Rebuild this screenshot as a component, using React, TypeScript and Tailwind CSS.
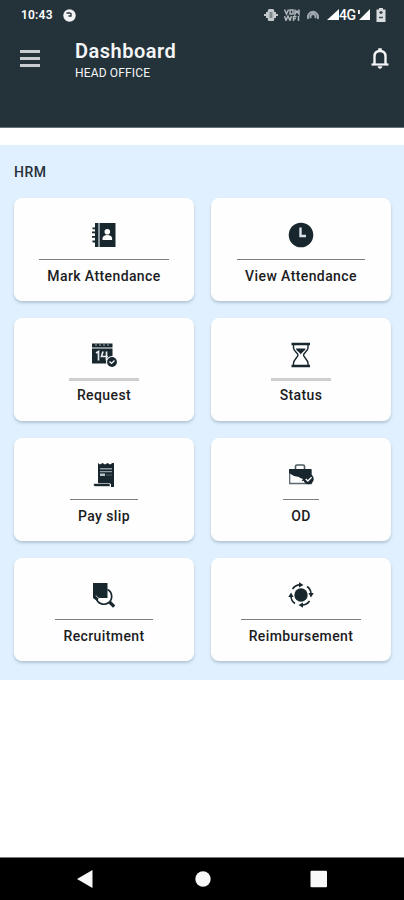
import React from "react";

type MenuItem = {
  title: string;
  icon: React.ReactNode;
  line: string;
};

// Address book
const BookIcon = () => (
  <svg width="26" height="26" viewBox="0 0 26 26" fill="#18262e">
    <path d="M4 1h3v24H4z" />
    <path d="M1.500 5.500H5v1.800H1.500zM1 9.500h4v1.800H1zM1 14h4v1.800H1zM1.500 18.600H5v1.800H1.500z" />
    <path d="M7 1h2v24H7z" fill="#8b969d" />
    <path d="M9 1h15.500v24H9z" />
    <circle cx="16.300" cy="9.700" r="2.800" fill="#fff" />
    <path d="M11.500 18v-1.500c0-2 2-3.500 4.800-3.500s4.800 1.500 4.800 3.500V18z" fill="#fff" />
  </svg>
);

const ClockIcon = () => (
  <svg width="26" height="26" viewBox="0 0 26 26">
    <circle cx="13" cy="13" r="12.300" fill="#18262e" />
    <path d="M12.500 5.500V14H18" fill="none" stroke="#dbe2e6" strokeWidth="2.400" />
  </svg>
);

// Calendar with a check badge
const CalendarIcon = () => (
  <svg width="26" height="26" viewBox="0 0 26 26">
    <path d="M1 1.500h20.500V5.500H1z" fill="#18262e" />
    <path d="M4 3h2M8 3h2M12 3h2M16 3h2" stroke="#a5adb1" strokeWidth="1.200" />
    <path d="M1 6.500h20.500v15H1z" fill="#18262e" />
    <path d="M5 11l2.500-1.500V18.500M12 9.500L10.500 14.500H17M15.500 9.500V18.500" fill="none" stroke="#e6eaec" strokeWidth="1.700" />
    <circle cx="21" cy="20" r="6" fill="#fff" />
    <circle cx="21" cy="20" r="4.900" fill="#18262e" />
    <path d="M18.500 19.500l2 2 3-3" fill="none" stroke="#fff" strokeWidth="1.200" />
  </svg>
);

const HourglassIcon = () => (
  <svg width="26" height="26" viewBox="0 0 26 26" fill="none" stroke="#18262e">
    <path d="M3.500 2h18.500M3.500 24h18.500" strokeWidth="2.400" />
    <path d="M5.500 3v3c0 3 4.500 5 4.500 7S5.500 18 5.500 21v3M20 3v3c0 3-4.500 5-4.500 7s4.500 5 4.500 8v3" strokeWidth="1.400" />
    <path d="M8 6.500h9.500c0 2.500-3.400 3-4.700 6-1.300-3-4.800-3.500-4.800-6z" fill="#18262e" stroke="none" />
  </svg>
);

const SlipIcon = () => (
  <svg width="26" height="26" viewBox="0 0 26 26">
    <path d="M7 1l2 1.500L11.500 1 14 2.500 16.500 1 19 2.500 21.500 1H23v24h-3v-3H7z" fill="#18262e" />
    <path d="M9 6h12v1.500H9zM9 9h12v1.300H9z" fill="#8f9ba1" />
    <path d="M9 11.500h5v2.500H9z" fill="#bac2c6" />
    <path d="M15 13h6" stroke="#52626b" strokeWidth="1" />
    <path d="M2.500 21.500H19v3H4c-1 0-1.500-1-1.500-3z" fill="#18262e" stroke="#fff" strokeWidth=".6" />
  </svg>
);

// Briefcase with a check badge
const BriefcaseIcon = () => (
  <svg width="26" height="26" viewBox="0 0 26 26">
    <path d="M7.500 7V4.500C7.500 3.500 8.200 3 9 3h6c.8 0 1.500.5 1.500 1.500V7" fill="none" stroke="#4a5961" strokeWidth="1.600" />
    <path d="M1.700 8h21.600v13.500H1.700z" fill="#fff" stroke="#5b686f" strokeWidth="1.300" />
    <path d="M1 7h22v8l-2 3-7 1-3-4-5-1-5-3z" fill="#18262e" />
    <path d="M9.500 15l4 4 1.500-2" fill="#fff" />
    <circle cx="20.500" cy="17" r="5.200" fill="#18262e" />
    <path d="M17.800 17l2 2 3.800-3.800" fill="none" stroke="#fff" strokeWidth="1.300" />
  </svg>
);

const SearchDocIcon = () => (
  <svg width="26" height="26" viewBox="0 0 26 26">
    <path d="M2 1h14.500v15H8l-2 3-4-3z" fill="#18262e" />
    <path d="M16.500 7.500a7.800 7.800 0 1 1-11.300 8.300" fill="none" stroke="#18262e" strokeWidth="1.700" />
    <path d="M5 13.500c1 1.800 2 2.500 3.500 2.800" fill="none" stroke="#fff" strokeWidth=".8" />
    <path d="M18.500 20l4.700 4.700" stroke="#18262e" strokeWidth="3.200" />
  </svg>
);

// Coin with rotating arrows
const RefundIcon = () => (
  <svg width="26" height="26" viewBox="0 0 26 26">
    <circle cx="13" cy="13" r="6.700" fill="#18262e" />
    <g fill="#18262e">
      {[0, 90, 180, 270].map((angle) => (
        <g key={angle} transform={`rotate(${angle} 13 13)`}>
          <path d="M4.500 7C6.200 4.500 8.500 3 12 2.900" fill="none" stroke="#18262e" strokeWidth="1.600" />
          <path d="M11 .300l4.500 2.700-4.500 2.600z" />
        </g>
      ))}
    </g>
  </svg>
);

const thinLine = "mt-[11px] h-px bg-[#7d7d7d]";
const thickLine = "mt-[10px] mb-[-2px] h-[3px] bg-[#d0cfd0]";

const menu: MenuItem[] = [
  { title: "Mark Attendance", icon: <BookIcon />, line: `${thinLine} w-[130px]` },
  { title: "View Attendance", icon: <ClockIcon />, line: `${thinLine} w-[128px]` },
  { title: "Request", icon: <CalendarIcon />, line: `${thickLine} w-[70px]` },
  { title: "Status", icon: <HourglassIcon />, line: `${thickLine} w-[60px]` },
  { title: "Pay slip", icon: <SlipIcon />, line: `${thinLine} w-[68px]` },
  { title: "OD", icon: <BriefcaseIcon />, line: `${thinLine} w-9` },
  { title: "Recruitment", icon: <SearchDocIcon />, line: `${thinLine} w-[98px]` },
  { title: "Reimbursement", icon: <RefundIcon />, line: `${thinLine} w-[120px]` },
];

const StatusBar = () => (
  <div className="flex h-[30px] items-center pl-[21px] pr-[18px] text-white">
    <span className="w-[33px] text-[12px] font-semibold leading-none tracking-[0.2px]">10:43</span>
    <svg className="ml-[9px]" width="13" height="13" viewBox="0 0 13 13">
      <circle cx="6.500" cy="6.500" r="6.200" fill="#f1f3f4" />
      <path d="M3.500 4h4M5.500 7h2.500V4" fill="none" stroke="#24323a" strokeWidth="1.300" />
    </svg>
    <div className="ml-auto flex items-center">
      {/* Vibrate */}
      <svg width="14" height="12" viewBox="0 0 14 12" fill="#c3c9cc">
        <path d="M0 5h2v2H0zM12 5h2v2h-2zM2 3h2v6H2zM10 3h2v6h-2z" />
        <rect x="3.800" y="0" width="6.400" height="12" rx="1.500" />
        <path d="M5.500 3h3v6h-3z" fill="#7c888e" />
      </svg>
      {/* VoWiFi */}
      <svg className="ml-[6px]" width="16" height="12" viewBox="0 0 16 12" fill="none" stroke="#aeb6ba" strokeWidth="1.500">
        <path d="M.5.500L2.500 5l2-4.500M6 1v4h3V1zM11 .500V5l2-3 2 3V.500M.5 7l1.500 4.500L4 7l2 4.500L7.500 7M9.500 7v5M9.500 7.500h3M9.500 9.500h2.500M14.500 7v5" />
      </svg>
      {/* Hotspot */}
      <svg className="ml-[7px]" width="12" height="12" viewBox="0 0 12 12" fill="none" stroke="#9fa9ae" strokeWidth="2">
        <path d="M1.500 10A5 5 0 1 1 10.500 10M4 9a2.500 2.500 0 1 1 4 0" />
      </svg>
      <svg className="ml-[8px]" width="12" height="12" viewBox="0 0 12 12" fill="#fff">
        <path d="M12 0v11H0z" />
      </svg>
      <span className="w-[17px] text-[14px] font-medium leading-none tracking-[-0.5px]">4G</span>
      <svg className="ml-px" width="14" height="12" viewBox="0 0 14 12" fill="#fff">
        <path d="M13 0v11H2zM1 1h1.800v4H1z" />
      </svg>
      <svg className="ml-[5px]" width="10" height="14" viewBox="0 0 10 14">
        <path d="M3 0h4v1.500h2.500V14H.5V1.500H3z" fill="#d9dddf" />
        <path d="M5 3v3M3.300 4.500h3.400M3 9.500h4" stroke="#3c4a52" strokeWidth="1.500" />
      </svg>
    </div>
  </div>
);

const Header = () => (
  <header className="h-32 border-b border-[#66737b] bg-[#24323a]">
    <StatusBar />
    <div className="flex pl-5 pr-[14px] text-[#f4f5f6]">
      <button className="mt-5 flex h-[17px] w-[20px] flex-col justify-between" aria-label="Menu">
        <span className="h-[3px] w-full bg-[#c8cdd0]" />
        <span className="h-[3px] w-full bg-[#c8cdd0]" />
        <span className="h-[3px] w-full bg-[#c8cdd0]" />
      </button>
      <div className="ml-[35px] mt-[9px]">
        <h1 className="text-[20px] font-semibold leading-6 tracking-[0.5px]">Dashboard</h1>
        <p className="mt-px text-[12px] leading-[19px] tracking-[0.15px]">HEAD OFFICE</p>
      </div>
      <svg className="ml-auto mt-[17px]" width="20" height="23" viewBox="0 0 20 23" fill="none" stroke="#f4f5f6">
        <path d="M4.500 17V9.500C4.500 6 6.800 4 10 4s5.500 2 5.500 5.500V17" strokeWidth="2.400" />
        <path d="M1.500 17.500h17" strokeWidth="2.200" />
        <path d="M8.500 3.500V1.500h3v2zM8 19.500h4c0 1.300-.8 2-2 2s-2-.7-2-2z" fill="#f4f5f6" strokeWidth=".5" />
      </svg>
    </div>
  </header>
);

const MenuCard = ({ item }: { item: MenuItem }) => (
  <div className="flex h-[103px] flex-col items-center rounded-lg bg-[#fefefe] pt-6 shadow-[0_2px_3px_rgba(70,95,120,0.3)]">
    {item.icon}
    <div className={item.line} />
    <p className="mt-[7px] whitespace-nowrap text-[14px] font-medium leading-[18px] tracking-[0.4px] text-[#1c1c1e]">
      {item.title}
    </p>
  </div>
);

const App: React.FC = () => {
  return (
    <div className="flex h-[900px] w-[404px] flex-col bg-white font-['Roboto',sans-serif]">
      <Header />

      <main className="mt-[17px] h-[535px] bg-[#e1f0fe] pl-[14px] pr-[13px] pt-[17px]">
        <h2 className="text-[14px] font-medium leading-5 tracking-[0.5px] text-[#26313a]">HRM</h2>
        <div className="mt-[15.500px] grid grid-cols-2 gap-x-[17px] gap-y-[17.200px]">
          {menu.map((item) => (
            <MenuCard key={item.title} item={item} />
          ))}
        </div>
      </main>

      {/* Android navigation bar */}
      <nav className="mt-auto flex h-[43px] items-center border-t border-[#777] bg-black pl-[77px] pr-[76px]">
        <svg className="w-full" height="20" viewBox="0 0 251 20" fill="#f8f8f8">
          <path d="M0 10L15.500 1v18z" />
          <circle cx="126" cy="10" r="7.700" />
          <rect x="233.500" y="1.800" width="16.500" height="16.500" rx="1" />
        </svg>
      </nav>
    </div>
  );
};

export default App;
